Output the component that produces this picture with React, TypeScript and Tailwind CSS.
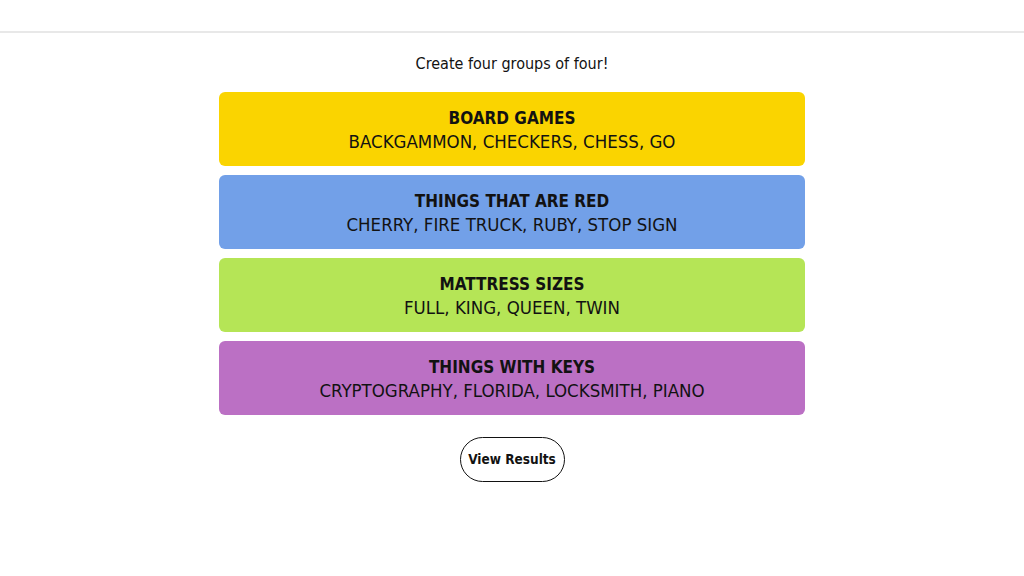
const groups = [
  { title: 'BOARD GAMES', words: 'BACKGAMMON, CHECKERS, CHESS, GO', color: 'bg-[#fad400]' },
  { title: 'THINGS THAT ARE RED', words: 'CHERRY, FIRE TRUCK, RUBY, STOP SIGN', color: 'bg-[#72a0e8]' },
  { title: 'MATTRESS SIZES', words: 'FULL, KING, QUEEN, TWIN', color: 'bg-[#b5e556]' },
  { title: 'THINGS WITH KEYS', words: 'CRYPTOGRAPHY, FLORIDA, LOCKSMITH, PIANO', color: 'bg-[#bb70c4]' },
];

export default function App() {
  return (
    <div className="min-h-screen w-full bg-white text-[#121212] font-['Liberation_Sans_Narrow','DejaVu_Sans_Condensed',sans-serif]">
      <header className="h-[33px] border-b-2 border-[#e8e8e8]" />
      <main className="flex flex-col items-center">
        <p className="mt-[21px] text-[16px] leading-[20px]">Create four groups of four!</p>
        <div className="mt-[18px] flex w-[586px] flex-col gap-[9px]">
          {groups.map((g) => (
            <div key={g.title} className={`${g.color} flex h-[74px] flex-col items-center justify-center rounded-[6px] pt-[2px]`}>
              <h3 className="text-[17px] font-bold leading-[23px]">{g.title}</h3>
              <p className="text-[18.5px] leading-[23px]">{g.words}</p>
            </div>
          ))}
        </div>
        <button className="mt-[22px] h-[45px] w-[105px] whitespace-nowrap rounded-full border border-[#121212] text-[13.5px] font-semibold">
          View Results
        </button>
      </main>
    </div>
  );
}
